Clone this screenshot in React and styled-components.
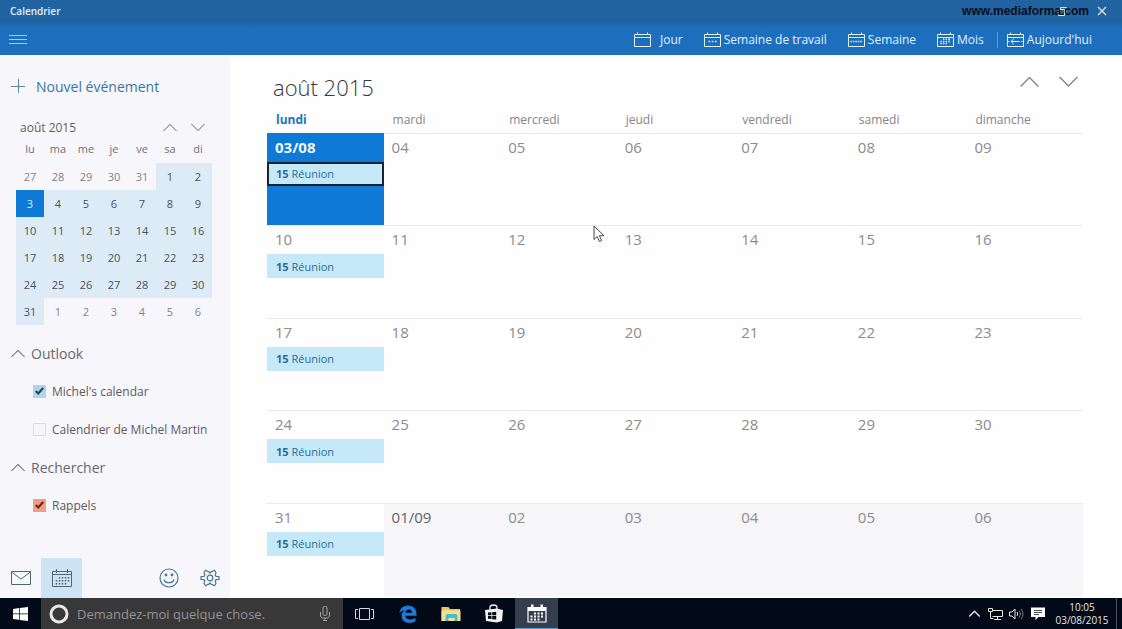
import { useState } from 'react';
import styled, { createGlobalStyle } from 'styled-components';

const colors = {
    title: '#2163a0',
    primary: '#1d6fbe',
    accent: '#0f7ad6',
    event: '#c5e9f9',
    eventText: '#2b6c94',
    sidebar: '#f7f7fb',
    month: '#dcebf5',
    gray: '#858589',
    dark: '#4c4c52',
    line: '#e9eaec',
    taskbar: '#020a17',
};

const dayNames = ['lundi', 'mardi', 'mercredi', 'jeudi', 'vendredi', 'samedi', 'dimanche'];
const shortNames = ['lu', 'ma', 'me', 'je', 've', 'sa', 'di'];

const weeks = [
    ['03/08', '04', '05', '06', '07', '08', '09'],
    ['10', '11', '12', '13', '14', '15', '16'],
    ['17', '18', '19', '20', '21', '22', '23'],
    ['24', '25', '26', '27', '28', '29', '30'],
    ['31', '01/09', '02', '03', '04', '05', '06'],
];

// 27 July is day -4 of August
const miniWeeks = [0, 1, 2, 3, 4, 5].map(week =>
    [0, 1, 2, 3, 4, 5, 6].map(day => {
        const n = week * 7 + day - 4;
        return {
            inMonth: n > 0 && n <= 31,
            label: n <= 0 ? n + 31 : n > 31 ? n - 31 : n,
            today: n === 3,
        };
    })
);

const Chevron = ({ down, width = 14, stroke = 1.3 }) => (
    <svg width={width} height={width / 2 + 2} viewBox='0 0 18 11' fill='none' stroke='currentColor' strokeWidth={stroke}>
        <path d={down ? 'M0.5 1L9 9.5L17.5 1' : 'M0.5 10L9 1.5L17.5 10'} />
    </svg>
);

const dots = {
    day: null,
    work: <path d='M4.5 9.5h1.6M7.7 9.5h1.6M10.9 9.5h1.6' strokeWidth='1.6' />,
    week: <path d='M2.6 9.5h1.4M5 9.5h1.4M7.4 9.5h1.4M9.8 9.5h1.4M12.2 9.5h1.6' strokeWidth='1.6' />,
    month: <path d='M6 7.2h1.4M8.6 7.2h1.4M11.2 7.2h1.8M3.4 9.4h1.4M6 9.4h1.4M8.6 9.4h1.4M11.2 9.4h1.8M3.4 11.6h1.4M6 11.6h1.4M8.6 11.6h1.4' strokeWidth='1.5' />,
    today: <path d='M12.5 9.5H4M6.8 6.8L4 9.5l2.8 2.7M1 9.5h1.5M14 9.5h1.5' />,
};

const ViewIcon = ({ type }) => (
    <svg width='17' height='16' viewBox='0 0 17 16' fill='none' stroke='#e4f0e0' strokeWidth='1'>
        <path d='M0.5 2.5h16v12h-16zM0.5 5.5h16M3.5 0.5v2M13.5 0.5v2' />
        {dots[type]}
    </svg>
);

const App = () => {
    const [calendars, setCalendars] = useState({ michel: true, martin: false, rappels: true });
    const toggle = name => setCalendars({ ...calendars, [name]: !calendars[name] });

    return (
        <Page>
            <GlobalStyle />
            <TitleBar>
                <span>Calendrier</span>
                <WindowButtons>
                    <WindowButton aria-label='Restaurer'>
                        <svg width='9' height='9' viewBox='0 0 9 9' fill='none' stroke='#d8ecc8'>
                            <path d='M0.5 2.5h6v6h-6zM2.5 2.5v-2h6v6h-2' />
                        </svg>
                    </WindowButton>
                    <WindowButton aria-label='Fermer'>
                        <svg width='10' height='10' viewBox='0 0 10 10' stroke='#dce9f5' strokeWidth='1.2'>
                            <path d='M1 1l8 8M9 1l-8 8' />
                        </svg>
                    </WindowButton>
                </WindowButtons>
                <Watermark>www.mediaforma.com</Watermark>
            </TitleBar>

            <CommandBar>
                <MenuButton aria-label='Menu'>
                    <svg width='18' height='11' viewBox='0 0 18 11' stroke='#9ed0ea'>
                        <path d='M0 1.5h18M0 5.5h18M0 9.5h18' />
                    </svg>
                </MenuButton>
                <Views>
                    <ViewButton $wide><ViewIcon type='day' />Jour</ViewButton>
                    <ViewButton><ViewIcon type='work' />Semaine de travail</ViewButton>
                    <ViewButton><ViewIcon type='week' />Semaine</ViewButton>
                    <ViewButton><ViewIcon type='month' />Mois</ViewButton>
                </Views>
                <TodayButton><ViewIcon type='today' />Aujourd'hui</TodayButton>
            </CommandBar>

            <Body>
                <Sidebar>
                    <NewEvent>
                        <svg width='14' height='14' viewBox='0 0 14 14' stroke='#5c8ba0'>
                            <path d='M0 7.5h14M7.5 0v14' />
                        </svg>
                        Nouvel événement
                    </NewEvent>

                    <MiniHeader>
                        <MiniTitle>août 2015</MiniTitle>
                        <ArrowButton aria-label='Mois précédent'><Chevron /></ArrowButton>
                        <ArrowButton aria-label='Mois suivant'><Chevron down /></ArrowButton>
                    </MiniHeader>
                    <MiniTable>
                        <thead>
                            <tr>{shortNames.map(name => <MiniName key={name}>{name}</MiniName>)}</tr>
                        </thead>
                        <tbody>
                            {miniWeeks.map((week, i) => (
                                <tr key={i}>
                                    {week.map(day => (
                                        <MiniCell key={day.label}>
                                            <MiniDay $inMonth={day.inMonth} $today={day.today}>{day.label}</MiniDay>
                                        </MiniCell>
                                    ))}
                                </tr>
                            ))}
                        </tbody>
                    </MiniTable>

                    <GroupButton><Chevron />Outlook</GroupButton>
                    <CalendarCheck label="Michel's calendar" color='#b3d3ea' mark='#1f4460' checked={calendars.michel} onChange={() => toggle('michel')} />
                    <CalendarCheck label='Calendrier de Michel Martin' color='#b3d3ea' mark='#1f4460' checked={calendars.martin} onChange={() => toggle('martin')} />
                    <GroupButton><Chevron />Rechercher</GroupButton>
                    <CalendarCheck label='Rappels' color='#ee9e84' mark='#6b2412' checked={calendars.rappels} onChange={() => toggle('rappels')} />

                    <SidebarNav>
                        <NavButton aria-label='Courrier'>
                            <svg width='20' height='14' viewBox='0 0 20 14' fill='none' stroke='#45705f'>
                                <path d='M0.5 0.5h19v13h-19zM0.5 1L10 8l9.5-7' />
                            </svg>
                        </NavButton>
                        <NavButton $active aria-label='Calendrier'>
                            <svg width='20' height='18' viewBox='0 0 20 18' fill='none' stroke='#4d6879'>
                                <path d='M0.5 2.5h19v15h-19zM0.5 5.5h19M4.5 0v4M15.5 0v4' />
                                <path d='M7.5 8v1.5M10.5 8v1.5M13.5 8v1.5M16.5 8v1.5M4.5 11v1.5M7.5 11v1.5M10.5 11v1.5M13.5 11v1.5M16.5 11v1.5M4.5 14v1.5M7.5 14v1.5M10.5 14v1.5M13.5 14v1.5' strokeWidth='1.5' />
                            </svg>
                        </NavButton>
                        <Spacer />
                        <NavButton aria-label='Commentaires'>
                            <svg width='20' height='20' viewBox='0 0 20 20' fill='none' stroke='#477791' strokeWidth='1.2'>
                                <circle cx='10' cy='10' r='9' />
                                <path d='M5 11.5c1 4.2 9 4.2 10 0' />
                                <circle cx='7' cy='7' r='0.8' fill='#477791' />
                                <circle cx='13' cy='7' r='0.8' fill='#477791' />
                            </svg>
                        </NavButton>
                        <NavButton aria-label='Paramètres'>
                            <svg width='20' height='18' viewBox='0 0 20 18' fill='none' stroke='#477791' strokeWidth='1.2' strokeLinejoin='round'>
                                <path d='M5.500 1.200L7.800 2.600L8.800 2.600L10 4.200L11.200 2.600L12.200 2.600L14.500 1.200L16 3.800L15.200 6L16 7.400L19 7.600V10.400L16 10.600L15.200 12L16 14.200L14.500 16.800L12.200 15.400L11.200 15.400L10 13.800L8.800 15.400L7.800 15.400L5.500 16.800L4 14.200L4.800 12L4 10.600L1 10.400V7.600L4 7.400L4.800 6L4 3.800z' />
                                <circle cx='10' cy='9' r='2.8' />
                            </svg>
                        </NavButton>
                    </SidebarNav>
                </Sidebar>

                <Main>
                    <MainHeader>
                        <MainTitle>août 2015</MainTitle>
                        <MainArrow aria-label='Précédent'><Chevron width={19} /></MainArrow>
                        <MainArrow aria-label='Suivant'><Chevron down width={19} /></MainArrow>
                    </MainHeader>
                    <MonthTable>
                        <thead>
                            <tr>
                                {dayNames.map((name, i) => <DayName key={name} $current={i === 0}>{name}</DayName>)}
                            </tr>
                        </thead>
                        <tbody>
                            {weeks.map((week, w) => (
                                <tr key={w}>
                                    {week.map((day, d) => (
                                        <DayCell key={day} $today={w === 0 && d === 0} $next={w === 4 && d > 0}>
                                            <DayNumber $today={w === 0 && d === 0} $strong={day === '01/09'}>{day}</DayNumber>
                                            {d === 0 && <Event $selected={w === 0}><b>15</b> Réunion</Event>}
                                        </DayCell>
                                    ))}
                                </tr>
                            ))}
                        </tbody>
                    </MonthTable>
                </Main>
            </Body>

            <Taskbar>
                <StartButton aria-label='Démarrer'>
                    <svg width='15' height='14' viewBox='0 0 15 14' fill='#fff'>
                        <path d='M0 2l6-.9v5.500H0zM6.700 1L15 0v6.600H6.700zM0 7.300h6v5.500L0 12zM6.700 7.300H15V14l-8.300-1z' />
                    </svg>
                </StartButton>
                <Search>
                    <svg width='20' height='20' viewBox='0 0 20 20' fill='none' stroke='#e9e9e9' strokeWidth='3'>
                        <circle cx='10' cy='10' r='8' />
                    </svg>
                    <SearchInput aria-label='Rechercher' placeholder='Demandez-moi quelque chose.' />
                    <MicButton aria-label='Micro'>
                        <svg width='10' height='15' viewBox='0 0 10 15' fill='none' stroke='#a4a4a4'>
                            <rect x='3' y='0.500' width='4' height='9' rx='1.500' />
                            <path d='M0.500 6v4.500l2 1.500h5l2-1.500V6M5 12v2.500M3 14.500h4' />
                        </svg>
                    </MicButton>
                </Search>
                <TaskButton aria-label='Affichage des tâches'>
                    <svg width='19' height='12' viewBox='0 0 19 12' fill='none' stroke='#d5d8dc'>
                        <path d='M4.500 0.500h10v11h-10zM3 1.500H0.500v9H3M16 1.500h2.500v9H16' />
                    </svg>
                </TaskButton>
                <TaskButton aria-label='Edge'>
                    <svg width='18' height='18' viewBox='0 0 18 18' fill='#1d7ad8'>
                        <path d='M0.400 8C1 3.500 4.300 0.500 9 0.500c5.500 0 8.500 3.700 8.500 8.500v1.800H6.300c.2 2.500 2.300 3.700 5 3.700 1.900 0 3.600-.5 5.200-1.400v3.500c-1.800.9-3.700 1.300-5.900 1.300C5.800 17.900 2.600 15 2.600 10.900c0-2.500 1.300-4.500 3.300-5.600C3.600 5.500 1.800 6.400.4 8zM6.400 7.700h6.500c0-2-1-3.300-3-3.300s-3.200 1.300-3.500 3.300z' />
                    </svg>
                </TaskButton>
                <TaskButton aria-label='Explorateur'>
                    <svg width='20' height='16' viewBox='0 0 20 16'>
                        <path d='M0.500 1h7l1.500 2h10v12H0.500z' fill='#e9c864' />
                        <path d='M0.500 4.500h19V15H0.500z' fill='#f9e08e' />
                        <path d='M4.500 15V9.500l1.500-1.500h9l1.500 1.500V15h-3v-3h-6v3z' fill='#45bdd0' />
                    </svg>
                </TaskButton>
                <TaskButton aria-label='Store'>
                    <svg width='20' height='19' viewBox='0 0 20 19'>
                        <path d='M6 6V3.500C6 1.800 7.500 1 9.500 1S13 1.800 13 3.500V6' fill='none' stroke='#f2f2f2' strokeWidth='1.300' />
                        <path d='M1 6l12-1.500v14L2 17zM12.900 4.500L19 6l-1 11-5.100 1.500z' fill='#f2f2f2' />
                        <path d='M4 8.600l3.500-.3v3H4zM8.200 8.200l4-.4v3.500h-4zM4 12h3.500v3.100L4 14.700zM8.200 12h4v3.600l-4-.4z' fill={colors.taskbar} />
                    </svg>
                </TaskButton>
                <TaskButton $active aria-label='Calendrier'>
                    <svg width='20' height='19' viewBox='0 0 20 19'>
                        <path d='M1 3.500h18V18H1z' fill='none' stroke='#fff' strokeWidth='1.200' />
                        <path d='M1 3h3V.5h2.500V3h7V.5H16V3h3v4H1z' fill='#fff' />
                        <path d='M7 9.500h2M10.500 9.500h2M14 9.500h2M3.500 12.500h2M7 12.500h2M10.500 12.500h2M14 12.500h2M3.500 15.500h2M7 15.500h2M10.500 15.500h2' stroke='#fff' strokeWidth='1.800' />
                    </svg>
                </TaskButton>
                <Spacer />
                <Tray>
                    <TrayButton aria-label='Icônes cachées'><Chevron width={11} stroke={2.2} /></TrayButton>
                    <TrayButton aria-label='Réseau'>
                        <svg width='15' height='12' viewBox='0 0 15 12' fill='none' stroke='#e6e6e6'>
                            <path d='M5 2.500h9.500v6H4.500M9.500 8.500v2.500M6 11.500h7M0.500 0.500h4v3h-4zM2.500 3.500v7h3' />
                        </svg>
                    </TrayButton>
                    <TrayButton aria-label='Volume'>
                        <svg width='15' height='12' viewBox='0 0 15 12' fill='none' stroke='#e6e6e6'>
                            <path d='M0.500 4h2.500L6 1v10L3 8H0.500z' />
                            <path d='M8 4c.8 1 .8 3 0 4' />
                            <path d='M10 2.500c1.800 2 1.800 5 0 7M12 1c2.600 3 2.600 7 0 10' stroke='#7d828c' />
                        </svg>
                    </TrayButton>
                    <TrayButton aria-label='Notifications'>
                        <svg width='14' height='13' viewBox='0 0 14 13'>
                            <path d='M0 0.500h14v9.500H7.500L4.500 13v-3H0z' fill='#fff' />
                            <path d='M3 3.500h8M3 5.500h8M3 7.500h5' stroke='#444b57' />
                        </svg>
                    </TrayButton>
                </Tray>
                <Clock>
                    <span>10:05</span>
                    <span>03/08/2015</span>
                </Clock>
                <ShowDesktop aria-label='Afficher le bureau' />
            </Taskbar>

            <Pointer width='12' height='18' viewBox='0 0 12 18'>
                <path d='M1 1v13.500l3.200-3 2.200 5 2.200-1-2.200-4.800H11z' fill='#fff' stroke='#4a4a4a' strokeLinejoin='round' />
            </Pointer>
        </Page>
    )
}

const CalendarCheck = ({ label, color, mark, checked, onChange }) => (
    <CheckLabel>
        <CheckBox>
            <CheckInput type='checkbox' $color={color} checked={checked} onChange={onChange} />
            {checked && (
                <CheckMark width='9' height='8' viewBox='0 0 9 8' fill='none' stroke={mark} strokeWidth='2'>
                    <path d='M0.800 4l2.400 2.500L8.200 1' />
                </CheckMark>
            )}
        </CheckBox>
        {label}
    </CheckLabel>
)

const GlobalStyle = createGlobalStyle`
    * {
        box-sizing: border-box;
    }

    body {
        margin: 0;
        font-family: 'Open Sans', 'Noto Sans', sans-serif;
        font-size: 12px;
        color: ${ colors.dark };
    }

    button, input {
        margin: 0;
        padding: 0;
        border: 0;
        background: none;
        font: inherit;
        color: inherit;
    }

    svg {
        display: block;
        flex: none;
    }
`

const Page = styled.div`
    display: flex;
    flex-direction: column;
    min-height: 100vh;
    background: #fefefe;
`

const Spacer = styled.div`
    flex: 1;
`

const TitleBar = styled.header`
    position: relative;
    display: flex;
    align-items: center;
    justify-content: space-between;
    height: 22px;
    padding: 0 10px;
    background: ${ colors.title };
    font-size: 10px;
    font-weight: 600;
    color: #e3eef8;
`

const WindowButtons = styled.div`
    display: flex;
`

const WindowButton = styled.button`
    display: flex;
    align-items: center;
    justify-content: center;
    width: 20px;
    height: 20px;

    & + & {
        margin-left: 20px;
    }
`

const Watermark = styled.div`
    position: absolute;
    top: 4px;
    right: 33px;
    font: bold 12px/14px 'Liberation Sans', sans-serif;
    color: #050d1c;
    pointer-events: none;
`

const CommandBar = styled.div`
    display: flex;
    align-items: center;
    height: 33px;
    padding: 2px 30px 0 9px;
    background: linear-gradient(${ colors.title }, ${ colors.primary } 6px);
    color: #e4eff9;
`

const MenuButton = styled.button`
    margin-right: auto;
`

const Views = styled.nav`
    display: flex;
    gap: 21px;
    padding-right: 13px;
    border-right: 1px solid #5b9bd6;
`

const ViewButton = styled.button`
    display: flex;
    align-items: center;
    gap: ${ props => props.$wide ? 9 : 3 }px;
    line-height: 16px;
    white-space: nowrap;
`

const TodayButton = styled(ViewButton)`
    margin-left: 9px;
`

const Body = styled.div`
    display: flex;
    flex: 1;
`

const Sidebar = styled.aside`
    display: flex;
    flex-direction: column;
    flex: none;
    width: 230px;
    padding-top: 12px;
    background: ${ colors.sidebar };
`

const NewEvent = styled.button`
    display: flex;
    align-items: center;
    gap: 11px;
    height: 38px;
    margin-bottom: 13px;
    padding-left: 11px;
    font-size: 14px;
    color: #3477a6;
`

const MiniHeader = styled.div`
    display: flex;
    align-items: center;
    height: 18px;
    padding: 0 18px 0 20px;
`

const MiniTitle = styled.h2`
    flex: 1;
    margin: 0;
    font-size: 12px;
    font-weight: 400;
    color: #5f5f66;
`

const ArrowButton = styled.button`
    display: flex;
    align-items: center;
    justify-content: center;
    width: 28px;
    height: 24px;
    color: ${ colors.gray };
`

const MiniTable = styled.table`
    width: 196px;
    margin: 0 0 9px 16px;
    border-collapse: collapse;
    table-layout: fixed;
    font-size: 11px;
`

const MiniName = styled.th`
    height: 27px;
    padding: 0 0 2px;
    font-weight: 400;
    color: #707077;
`

const MiniCell = styled.td`
    height: 27px;
    padding: 0;
`

const MiniDay = styled.button`
    display: block;
    width: 100%;
    height: 27px;
    background: ${ props => props.$today ? colors.accent : props.$inMonth ? colors.month : 'none' };
    color: ${ props => props.$today ? '#d6ecfb' : props.$inMonth ? '#46525c' : '#828288' };
`

const GroupButton = styled.button`
    display: flex;
    align-items: center;
    gap: 6px;
    height: 38px;
    padding-left: 11px;
    font-size: 14px;
    color: #67676d;
`

const CheckLabel = styled.label`
    display: flex;
    align-items: center;
    gap: 6px;
    height: 38px;
    padding-left: 33px;
    white-space: nowrap;
    color: #5a5a60;
`

const CheckBox = styled.span`
    display: grid;
    place-items: center;

    > * {
        grid-area: 1 / 1;
    }
`

const CheckInput = styled.input`
    appearance: none;
    width: 13px;
    height: 13px;
    border: 1px solid #d9dce2;

    &:checked {
        border-color: ${ props => props.$color };
        background: ${ props => props.$color };
    }
`

const CheckMark = styled.svg`
    pointer-events: none;
`

const SidebarNav = styled.nav`
    display: flex;
    margin-top: auto;
`

const NavButton = styled.button`
    display: flex;
    align-items: center;
    justify-content: center;
    width: 41px;
    height: 40px;
    background: ${ props => props.$active ? '#cde4f4' : 'none' };
`

const Main = styled.main`
    display: flex;
    flex-direction: column;
    flex: 1;
    padding: 15px 39px 2px 37px;
`

const MainHeader = styled.div`
    display: flex;
    gap: 9px;
    height: 36px;
`

const MainTitle = styled.h1`
    flex: 1;
    margin: 0;
    padding-left: 6px;
    font-size: 22px;
    font-weight: 300;
    line-height: 34px;
    color: #37373c;
`

const MainArrow = styled(ArrowButton)`
    width: 30px;
`

const MonthTable = styled.table`
    flex: 1;
    width: 100%;
    border-collapse: collapse;
    table-layout: fixed;
`

const DayName = styled.th`
    height: 27px;
    padding: 0 9px;
    text-align: left;
    font-weight: ${ props => props.$current ? 700 : 400 };
    color: ${ props => props.$current ? '#1a76bd' : colors.gray };
`

const DayCell = styled.td`
    height: 92px;
    padding: 0;
    border-top: 1px solid ${ props => props.$today ? colors.accent : colors.line };
    background: ${ props => props.$today ? colors.accent : props.$next ? '#f6f6f8' : 'none' };
    vertical-align: top;
`

const DayNumber = styled.div`
    height: 28px;
    padding: 0 8px;
    font-size: 15px;
    font-weight: ${ props => props.$today ? 700 : 400 };
    line-height: 26px;
    color: ${ props => props.$today ? '#eaf5fd' : props.$strong ? '#606066' : '#8b8b90' };
`

const Event = styled.button`
    display: block;
    width: 100%;
    height: 24px;
    padding: 0 9px;
    background: ${ colors.event };
    box-shadow: ${ props => props.$selected ? 'inset 0 0 0 2px #14232f' : 'none' };
    font-size: 11px;
    text-align: left;
    color: ${ colors.eventText };
`

const Taskbar = styled.footer`
    display: flex;
    height: 31px;
    background: ${ colors.taskbar };
    color: #e6e6e6;
`

const StartButton = styled.button`
    display: flex;
    align-items: center;
    justify-content: center;
    width: 41px;
`

const Search = styled.div`
    display: flex;
    align-items: center;
    gap: 8px;
    width: 302px;
    padding: 0 13px 0 8px;
    background: #383838;
`

const SearchInput = styled.input`
    flex: 1;
    min-width: 0;
    font-size: 13px;

    &::placeholder {
        color: #949494;
    }
`

const MicButton = styled.button``

const TaskButton = styled.button`
    display: flex;
    align-items: center;
    justify-content: center;
    width: 43px;
    background: ${ props => props.$active ? '#363d4c' : 'none' };
    box-shadow: ${ props => props.$active ? 'inset 0 -1px #5f9bd0' : 'none' };
`

const Tray = styled.div`
    display: flex;
`

const TrayButton = styled.button`
    display: flex;
    align-items: center;
    justify-content: center;
    width: 21px;
`

const Clock = styled.div`
    display: flex;
    flex-direction: column;
    justify-content: center;
    width: 68px;
    font-size: 10px;
    line-height: 13px;
    text-align: center;
`

const ShowDesktop = styled.button`
    width: 6px;
    border-left: 1px solid #4c535f;
`

const Pointer = styled.svg`
    position: absolute;
    top: 225px;
    left: 593px;
    pointer-events: none;
`

export default App
